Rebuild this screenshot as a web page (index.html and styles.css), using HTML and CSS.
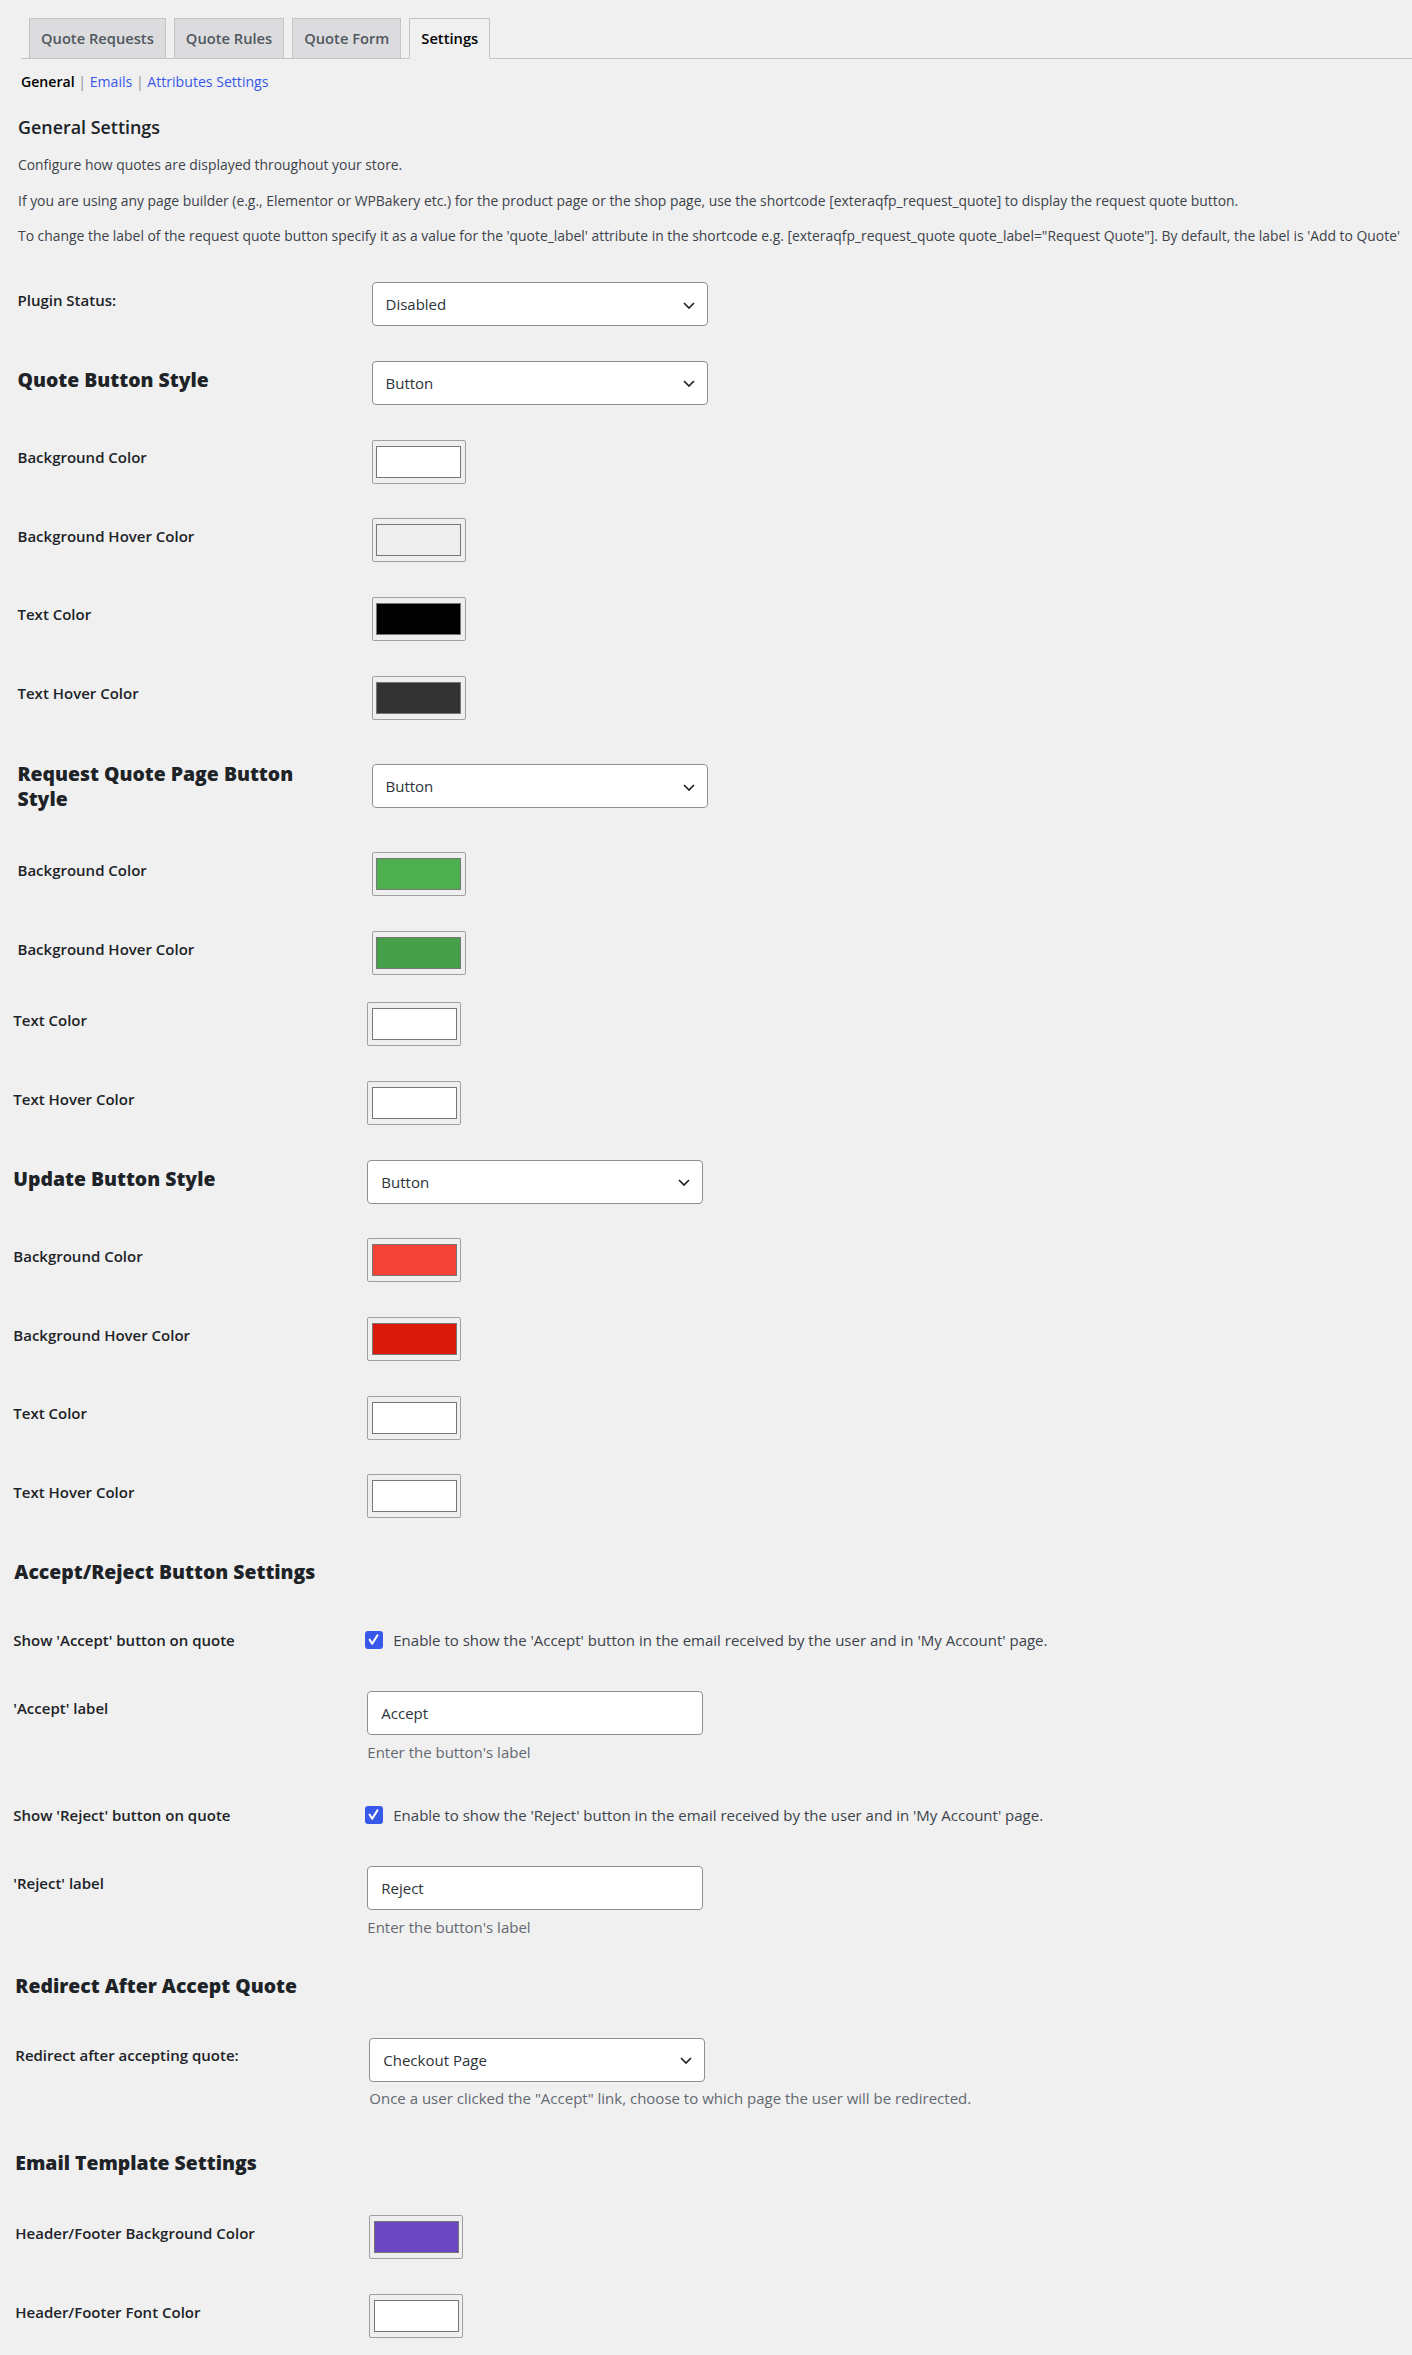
FILE: index.html
```html
<!DOCTYPE html>
<html lang="en">
<head>
  <meta charset="UTF-8" />
  <title>Quote Settings</title>
  <meta name="viewport" content="width=device-width, initial-scale=1.0" />
  <link rel="stylesheet" href="styles.css">
</head>
<body>
<div class="wrap">

  <nav class="nav-tabs">
    <a href="#" class="nav-tab">Quote Requests</a>
    <a href="#" class="nav-tab">Quote Rules</a>
    <a href="#" class="nav-tab">Quote Form</a>
    <a href="#" class="nav-tab nav-tab-active">Settings</a>
  </nav>

  <ul class="subnav">
    <li><a href="#" class="current">General</a> <span class="sep">|</span> </li>
    <li><a href="#">Emails</a> <span class="sep">|</span> </li>
    <li><a href="#">Attributes Settings</a></li>
  </ul>

  <h2 class="page-title">General Settings</h2>
  <p class="intro first">Configure how quotes are displayed throughout your store.</p>
  <p class="intro">If you are using any page builder (e.g., Elementor or WPBakery etc.) for the product page or the shop page, use the shortcode [exteraqfp_request_quote] to display the request quote button.</p>
  <p class="intro">To change the label of the request quote button specify it as a value for the 'quote_label' attribute in the shortcode e.g. [exteraqfp_request_quote quote_label="Request Quote"]. By default, the label is 'Add to Quote'</p>

  <!-- quote button -->
  <div class="form-table sec-a">
    <div class="row">
      <div class="row-label">Plugin Status:</div>
      <div class="row-field">
        <div class="select"><span>Disabled</span><svg width="12" height="7" viewBox="0 0 12 7"><path d="M1 1l5 5 5-5" fill="none" stroke="#1d2327" stroke-width="1.7"/></svg></div>
      </div>
    </div>
    <div class="row">
      <div class="row-label row-label-big">Quote Button Style</div>
      <div class="row-field">
        <div class="select"><span>Button</span><svg width="12" height="7" viewBox="0 0 12 7"><path d="M1 1l5 5 5-5" fill="none" stroke="#1d2327" stroke-width="1.7"/></svg></div>
      </div>
    </div>
    <div class="row">
      <div class="row-label">Background Color</div>
      <div class="row-field"><span class="swatch"><span class="swatch-color" style="background:#ffffff"></span></span></div>
    </div>
    <div class="row">
      <div class="row-label">Background Hover Color</div>
      <div class="row-field"><span class="swatch"><span class="swatch-color" style="background:#eeeeee"></span></span></div>
    </div>
    <div class="row">
      <div class="row-label">Text Color</div>
      <div class="row-field"><span class="swatch"><span class="swatch-color" style="background:#000000"></span></span></div>
    </div>
    <div class="row">
      <div class="row-label">Text Hover Color</div>
      <div class="row-field"><span class="swatch"><span class="swatch-color" style="background:#333333"></span></span></div>
    </div>

    <div class="row row-tall">
      <div class="row-label row-label-big">Request Quote Page Button<br>Style</div>
      <div class="row-field">
        <div class="select"><span>Button</span><svg width="12" height="7" viewBox="0 0 12 7"><path d="M1 1l5 5 5-5" fill="none" stroke="#1d2327" stroke-width="1.7"/></svg></div>
      </div>
    </div>
    <div class="row">
      <div class="row-label">Background Color</div>
      <div class="row-field"><span class="swatch"><span class="swatch-color" style="background:#4caf50"></span></span></div>
    </div>
    <div class="row">
      <div class="row-label">Background Hover Color</div>
      <div class="row-field"><span class="swatch"><span class="swatch-color" style="background:#45a049"></span></span></div>
    </div>
  </div>

  <div class="form-table sec-b">
    <div class="row">
      <div class="row-label">Text Color</div>
      <div class="row-field"><span class="swatch"><span class="swatch-color" style="background:#ffffff"></span></span></div>
    </div>
    <div class="row">
      <div class="row-label">Text Hover Color</div>
      <div class="row-field"><span class="swatch"><span class="swatch-color" style="background:#ffffff"></span></span></div>
    </div>

    <div class="row">
      <div class="row-label row-label-big">Update Button Style</div>
      <div class="row-field">
        <div class="select"><span>Button</span><svg width="12" height="7" viewBox="0 0 12 7"><path d="M1 1l5 5 5-5" fill="none" stroke="#1d2327" stroke-width="1.7"/></svg></div>
      </div>
    </div>
    <div class="row">
      <div class="row-label">Background Color</div>
      <div class="row-field"><span class="swatch"><span class="swatch-color" style="background:#f44336"></span></span></div>
    </div>
    <div class="row">
      <div class="row-label">Background Hover Color</div>
      <div class="row-field"><span class="swatch"><span class="swatch-color" style="background:#da190b"></span></span></div>
    </div>
    <div class="row">
      <div class="row-label">Text Color</div>
      <div class="row-field"><span class="swatch"><span class="swatch-color" style="background:#ffffff"></span></span></div>
    </div>
    <div class="row">
      <div class="row-label">Text Hover Color</div>
      <div class="row-field"><span class="swatch"><span class="swatch-color" style="background:#ffffff"></span></span></div>
    </div>
  </div>

  <!-- accept / reject -->
  <div class="section sec-c">
    <h3 class="section-title">Accept/Reject Button Settings</h3>
    <div class="form-table compact">
      <div class="row">
        <div class="row-label row-label-flat">Show 'Accept' button on quote</div>
        <div class="row-field check-field">
          <span class="check"><svg width="17" height="17" viewBox="0 0 17 17"><path d="M4.6 8.6l2.6 4.2 5.2-8.4" fill="none" stroke="#fff" stroke-width="2" stroke-linecap="round" stroke-linejoin="round"/></svg></span>
          <span>Enable to show the 'Accept' button in the email received by the user and in 'My Account' page.</span>
        </div>
      </div>
      <div class="row">
        <div class="row-label">'Accept' label</div>
        <div class="row-field">
          <input type="text" class="text-input" value="Accept" />
          <p class="description">Enter the button's label</p>
        </div>
      </div>
      <div class="row row-after-desc">
        <div class="row-label row-label-flat">Show 'Reject' button on quote</div>
        <div class="row-field check-field">
          <span class="check"><svg width="17" height="17" viewBox="0 0 17 17"><path d="M4.6 8.6l2.6 4.2 5.2-8.4" fill="none" stroke="#fff" stroke-width="2" stroke-linecap="round" stroke-linejoin="round"/></svg></span>
          <span>Enable to show the 'Reject' button in the email received by the user and in 'My Account' page.</span>
        </div>
      </div>
      <div class="row">
        <div class="row-label">'Reject' label</div>
        <div class="row-field">
          <input type="text" class="text-input" value="Reject" />
          <p class="description">Enter the button's label</p>
        </div>
      </div>
    </div>
  </div>

  <!-- redirect -->
  <div class="section sec-d">
    <h3 class="section-title">Redirect After Accept Quote</h3>
    <div class="form-table redirect">
      <div class="row">
        <div class="row-label">Redirect after accepting quote:</div>
        <div class="row-field">
          <div class="select"><span>Checkout Page</span><svg width="12" height="7" viewBox="0 0 12 7"><path d="M1 1l5 5 5-5" fill="none" stroke="#1d2327" stroke-width="1.7"/></svg></div>
          <p class="description desc-tight">Once a user clicked the "Accept" link, choose to which page the user will be redirected.</p>
        </div>
      </div>
    </div>
  </div>

  <!-- email template -->
  <div class="section sec-e">
    <h3 class="section-title">Email Template Settings</h3>
    <div class="form-table email">
      <div class="row">
        <div class="row-label">Header/Footer Background Color</div>
        <div class="row-field"><span class="swatch"><span class="swatch-color" style="background:#6b47c1"></span></span></div>
      </div>
      <div class="row">
        <div class="row-label">Header/Footer Font Color</div>
        <div class="row-field"><span class="swatch"><span class="swatch-color" style="background:#ffffff"></span></span></div>
      </div>
    </div>
  </div>

</div>
</body>
</html>
```

FILE: styles.css
```css
body {
  margin: 0;
  background: #f0f0f1;
  color: #3c434a;
  font-family: "Open Sans", "Noto Sans", sans-serif;
  font-size: 13.9px;
  line-height: 20px;
}
.wrap { padding: 18px 0 16px; }

/* tabs */
.nav-tabs {
  display: flex;
  gap: 8px;
  margin-left: 21px;
  padding-left: 8px;
  border-bottom: 1px solid #c3c4c7;
}
.nav-tab {
  font-size: 14.7px;
  font-weight: 600;
  line-height: 24px;
  padding: 7px 11px 8px;
  margin-bottom: -1px;
  border: 1px solid #c3c4c7;
  background: #dcdcde;
  color: #50575e;
  text-decoration: none;
}
.nav-tab-active {
  background: #f0f0f1;
  border-bottom-color: #f0f0f1;
  color: #000;
}

.subnav {
  display: flex;
  list-style: none;
  margin: 12.9px 0 0;
  padding: 0 0 0 21px;
  font-size: 14.1px;
  white-space: pre;
}
.subnav a { color: #3858e9; text-decoration: none; }
.subnav a.current { color: #000; font-weight: 600; }
.subnav .sep { color: #8c8f94; }

.page-title {
  margin: 22.7px 0 0;
  padding-left: 18px;
  font-size: 17.9px;
  font-weight: 600;
  line-height: 24px;
  color: #1d2327;
}
.intro {
  margin: 15.3px 0 0;
  padding-left: 18px;
  white-space: nowrap;
}
.intro.first { margin-top: 16.8px; }

/* form rows */
.form-table {
  display: flex;
  flex-direction: column;
  gap: 34.7px;
}
.sec-a { margin-top: 36.2px; padding-left: 17.5px; }
.sec-b { margin-top: 27.2px; padding-left: 13.3px; }

.row { display: flex; align-items: flex-start; }
.row-tall { margin: 10px 0 9.5px; }
.row-label {
  flex: 0 0 354px;
  padding-top: 7.5px;
  font-size: 15px;
  font-weight: 600;
  line-height: 20px;
  color: #1d2327;
}
.row-label-big {
  padding-top: 6.3px;
  font-size: 19.4px;
  font-weight: 800;
  line-height: 25px;
}
.row-tall .row-label-big {
  padding-top: 0;
  margin: -2.3px 0 -3.2px;
  line-height: 24.7px;
}
.row-label-flat { padding-top: 0; }

.select {
  width: 336px;
  height: 44px;
  box-sizing: border-box;
  display: flex;
  align-items: center;
  justify-content: space-between;
  padding: 0 12px 0 13px;
  border: 1px solid #8c8f94;
  border-radius: 4px;
  background: #fff;
  color: #2c3338;
  font-size: 15px;
}
.select svg { margin-top: 2px; }

.swatch {
  display: block;
  width: 94px;
  height: 44px;
  box-sizing: border-box;
  padding: 5px 3.5px;
  border: 1px solid #a0a0a0;
  border-radius: 2px;
  background: #efefef;
}
.swatch-color {
  display: block;
  height: 100%;
  box-sizing: border-box;
  border: 1px solid #767676;
}

/* sections with a title */
.section-title {
  margin: 0;
  font-size: 19.4px;
  font-weight: 800;
  line-height: 25px;
  color: #1d2327;
}
.sec-c { margin-top: 40.3px; padding-left: 13.3px; }
.sec-c .section-title { margin-left: 1px; }
.sec-d { margin-top: 36.2px; padding-left: 15.3px; }
.sec-e { margin-top: 42.9px; padding-left: 15.3px; }

.compact { margin-top: 46.6px; gap: 40.4px; }
.compact .row-after-desc { margin-top: 2.9px; }
.redirect { margin-top: 39.5px; }
.email { margin-top: 39.9px; gap: 35px; }

.check-field {
  display: flex;
  align-items: flex-start;
  white-space: nowrap;
  color: #3c434a;
  font-size: 15px;
}
.check {
  flex: 0 0 auto;
  width: 17.4px;
  height: 17.4px;
  margin: 0.9px 10.6px 0 -2px;
  border-radius: 3px;
  background: #3858e9;
}
.check svg { display: block; }

.text-input {
  display: block;
  width: 336px;
  height: 44px;
  box-sizing: border-box;
  margin: 0;
  padding: 0 13px;
  border: 1px solid #8c8f94;
  border-radius: 4px;
  background: #fff;
  color: #2c3338;
  font-family: inherit;
  font-size: 15px;
}
.description {
  margin: 7.3px 0 0;
  color: #646970;
  font-size: 15px;
  white-space: nowrap;
}
.desc-tight { margin-top: 5.9px; }
```
